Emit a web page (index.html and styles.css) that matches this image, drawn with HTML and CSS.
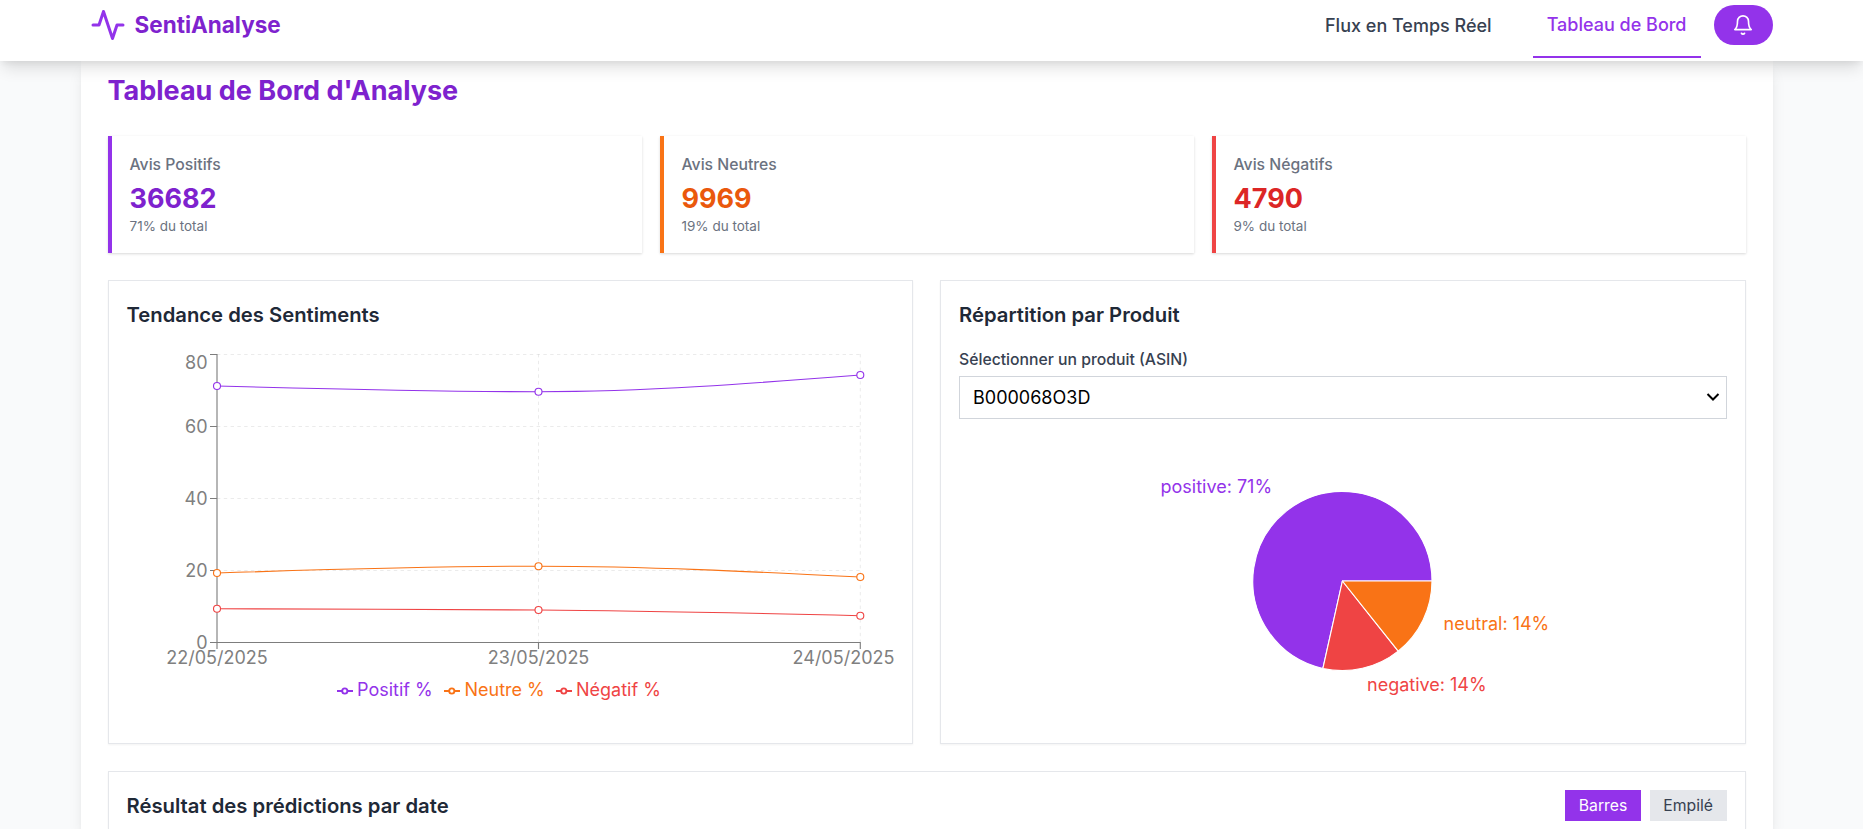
FILE: index.html
```html
<!DOCTYPE html>
<html lang="fr">
<head>
<meta charset="utf-8">
<title>SentiAnalyse</title>
<link rel="stylesheet" href="styles.css">
</head>
<body>
<header class="topbar">
  <div class="brand">
    <svg class="brand-icon" viewBox="0 0 24 24"><path d="M22 12h-4l-3 9L9 3l-3 9H2"/></svg>
    <span>SentiAnalyse</span>
  </div>
  <nav class="nav">
    <a class="nav-link">Flux en Temps Réel</a>
    <a class="nav-link nav-active">Tableau de Bord</a>
    <button class="bell" aria-label="Notifications">
      <svg viewBox="0 0 24 24"><path d="M6 8a6 6 0 0 1 12 0c0 7 3 9 3 9H3s3-2 3-9"/><path d="M10.3 21a1.94 1.94 0 0 0 3.4 0"/></svg>
    </button>
  </nav>
</header>
<main class="page">
  <h1 class="title">Tableau de Bord d'Analyse</h1>
  <section class="stats">
    <div class="stat stat-positive"><span class="stat-label">Avis Positifs</span><strong class="stat-value">36682</strong><span class="stat-note">71% du total</span></div>
    <div class="stat stat-neutral"><span class="stat-label">Avis Neutres</span><strong class="stat-value">9969</strong><span class="stat-note">19% du total</span></div>
    <div class="stat stat-negative"><span class="stat-label">Avis Négatifs</span><strong class="stat-value">4790</strong><span class="stat-note">9% du total</span></div>
  </section>
  <section class="charts">
    <div class="card">
      <h2 class="card-title">Tendance des Sentiments</h2>
      <svg class="chart" width="767" height="360" viewBox="127 353 767 360">
        <g class="grid">
          <path d="M217 354.500H860M217 426.500H860M217 498.500H860M217 570.500H860M538.500 354V642M860.300 354V642"/>
        </g>
        <g class="axis">
          <path d="M217 354V642M210 642.500H860M210 354.500H217M210 426.500H217M210 498.500H217M210 570.500H217M217 642V649M538.500 642V649M860.300 642V649"/>
        </g>
        <g class="tick tick-y">
          <text x="207.500" y="369">80</text><text x="207.500" y="433">60</text><text x="207.500" y="505">40</text><text x="207.500" y="577">20</text><text x="207.500" y="649">0</text>
        </g>
        <g class="tick tick-x">
          <text x="217" y="664">22/05/2025</text><text x="538.500" y="664">23/05/2025</text><text x="843.500" y="664">24/05/2025</text>
        </g>
        <g class="series purple">
          <path d="M217 386C324 388.900 431.500 391.700 538.500 391.700C645.700 391.700 753 383.400 860.300 375"/>
          <circle cx="217" cy="386" r="3.500"/><circle cx="538.500" cy="391.700" r="3.500"/><circle cx="860.300" cy="375" r="3.500"/>
        </g>
        <g class="series orange">
          <path d="M217 573C324 569.500 431.500 566.200 538.500 566.200C645.700 566.200 753 571.600 860.300 577"/>
          <circle cx="217" cy="573" r="3.500"/><circle cx="538.500" cy="566.200" r="3.500"/><circle cx="860.300" cy="577" r="3.500"/>
        </g>
        <g class="series red">
          <path d="M217 608.700C324 609.100 431.500 609.300 538.500 610C645.700 610.700 753 613.200 860.300 615.700"/>
          <circle cx="217" cy="608.700" r="3.500"/><circle cx="538.500" cy="610" r="3.500"/><circle cx="860.300" cy="615.700" r="3.500"/>
        </g>
        <g class="legend purple"><path d="M337 691H342.300M347.300 691H353"/><circle cx="344.800" cy="691" r="2.600"/><text x="357" y="696">Positif %</text></g>
        <g class="legend orange"><path d="M444 691H449.300M454.300 691H460"/><circle cx="451.800" cy="691" r="2.600"/><text x="464.500" y="696">Neutre %</text></g>
        <g class="legend red"><path d="M556 691H561.300M566.300 691H572"/><circle cx="563.800" cy="691" r="2.600"/><text x="576" y="696">Négatif %</text></g>
      </svg>
    </div>
    <div class="card">
      <h2 class="card-title card-title-tight">Répartition par Produit</h2>
      <label class="field-label">Sélectionner un produit (ASIN)</label>
      <div class="select"><span>B000068O3D</span><svg viewBox="0 0 14 10"><path d="M1.500 2L7 7.500L12.500 2"/></svg></div>
      <svg class="chart" width="767" height="280" viewBox="959 437 767 280">
        <g class="pie">
          <path class="slice-positive" d="M1342.400 581H1432A89.600 89.600 0 1 0 1322.900 668.450Z"/>
          <path class="slice-negative" d="M1342.400 581L1322.900 668.450A89.600 89.600 0 0 0 1398.200 651.100Z"/>
          <path class="slice-neutral" d="M1342.400 581L1398.200 651.100A89.600 89.600 0 0 0 1432 581Z"/>
        </g>
        <g class="pie-label">
          <text class="label-positive" x="1160.500" y="493">positive: 71%</text>
          <text class="label-neutral" x="1443.500" y="630">neutral: 14%</text>
          <text class="label-negative" x="1367" y="691">negative: 14%</text>
        </g>
      </svg>
    </div>
  </section>
  <section class="card results">
    <h2 class="card-title">Résultat des prédictions par date</h2>
    <div class="toggle"><button class="toggle-on">Barres</button><button>Empilé</button></div>
  </section>
</main>
</body>
</html>
```
FILE: styles.css
```css
html { font-size: 18px; }
* { box-sizing: border-box; }
body { margin: 0; height: 829px; overflow: hidden; background: #f9fafb; font-family: Inter, sans-serif; line-height: 1.5; color: #1f2937; }
.topbar { position: relative; z-index: 2; height: 61px; padding: 0 90px 0 89.5px; display: flex; justify-content: space-between; align-items: flex-start; background: #fff; box-shadow: 0 10px 15px -3px rgba(0,0,0,.12), 0 4px 6px -2px rgba(0,0,0,.06); }
.brand { display: flex; align-items: center; gap: 9px; height: 50px; font-size: 22.5px; font-weight: 700; color: #7e22ce; }
.brand-icon { width: 36px; height: 36px; fill: none; stroke: #9333ea; stroke-width: 2; stroke-linecap: round; stroke-linejoin: round; }
.nav { display: flex; align-items: flex-start; font-size: 18px; font-weight: 500; }
.nav-link { height: 58px; padding: 12px 14px 0; line-height: 27px; color: #374151; }
.nav-active { margin-left: 27px; padding-top: 11px; color: #9333ea; border-bottom: 2px solid #9333ea; }
.bell { margin: 5px 0 0 13.5px; width: 59px; height: 40px; padding: 0 1px 0 0; display: flex; align-items: center; justify-content: center; border: 0; border-radius: 20px; background: #9333ea; }
.bell svg { width: 22px; height: 22px; fill: none; stroke: #fff; stroke-width: 1.8; stroke-linecap: round; stroke-linejoin: round; }
.page { display: flex; flex-direction: column; width: 1692px; height: 768px; margin-left: 80.5px; padding: 11px 27px 0; background: #fff; box-shadow: 0 10px 15px -3px rgba(0,0,0,.1), 0 4px 6px -2px rgba(0,0,0,.05); }
.title { margin: 0 0 27px; font-size: 27px; line-height: 37px; font-weight: 700; color: #7e22ce; }
.stats { display: grid; grid-template-columns: repeat(3, 1fr); gap: 18px; margin-bottom: 27px; }
.stat { height: 117px; padding: 18px; display: flex; flex-direction: column; border-left: 4px solid; box-shadow: 0 1px 3px rgba(0,0,0,.1), 0 1px 2px rgba(0,0,0,.06); }
.stat-label { font-size: 15.75px; line-height: 22.5px; font-weight: 500; color: #6b7280; }
.stat-value { font-size: 27px; line-height: 36px; margin-top: 4px; font-weight: 700; }
.stat-note { font-size: 13.5px; line-height: 18px; color: #6b7280; }
.stat-positive { border-color: #9333ea; }
.stat-positive .stat-value { color: #7e22ce; }
.stat-neutral { border-color: #f97316; }
.stat-neutral .stat-value { color: #ea580c; }
.stat-negative { border-color: #ef4444; }
.stat-negative .stat-value { color: #dc2626; }
.charts { display: grid; grid-template-columns: 1fr 1fr; gap: 27px; margin-bottom: 27px; }
.card { height: 464px; padding: 18px; border: 1px solid #e5e7eb; background: #fff; box-shadow: 0 1px 2px rgba(0,0,0,.05); }
.card-title { margin: 0 0 22px; font-size: 20.25px; line-height: 31.5px; font-weight: 600; color: #1f2937; }
.card-title-tight { margin-bottom: 18px; }
.chart { display: block; overflow: visible; }
.grid path { fill: none; stroke: #ccc; stroke-width: 1; stroke-dasharray: 3.4 3.4; opacity: .4; }
.axis path { fill: none; stroke: #666; stroke-width: 1.125; opacity: .85; }
.tick { font-size: 18px; fill: #808080; }
.tick-y { text-anchor: end; }
.tick-x { text-anchor: middle; }
.series { fill: none; stroke: currentColor; stroke-width: 1.125; }
.series circle { fill: #fff; }
.purple { color: #9333ea; }
.orange { color: #f97316; }
.red { color: #ef4444; }
.legend { font-size: 18px; stroke: currentColor; stroke-width: 1.9; fill: none; }
.legend text { fill: currentColor; stroke: none; }
.field-label { display: block; margin-bottom: 4.5px; font-size: 15.75px; line-height: 22.5px; font-weight: 500; color: #374151; }
.select { height: 43px; margin-bottom: 18px; padding: 0 6px 0 13px; display: flex; justify-content: space-between; align-items: center; border: 1px solid #d1d5db; font-size: 18px; color: #000; }
.select svg { width: 14px; height: 10px; fill: none; stroke: #000; stroke-width: 2; }
.pie path { stroke: #fff; stroke-width: 1.125; stroke-linejoin: round; }
.slice-positive, .label-positive { fill: #9333ea; }
.slice-neutral, .label-neutral { fill: #f97316; }
.slice-negative, .label-negative { fill: #ef4444; }
.pie-label { font-size: 18px; }
.results { flex: 1; min-height: 0; height: auto; padding-bottom: 0; border-bottom: 0; display: flex; align-items: flex-start; justify-content: space-between; }
.results .card-title { margin: 0; }
.toggle { display: flex; gap: 9px; }
.toggle button { height: 31px; padding: 0 13.5px 1px; border: 0; background: #e5e7eb; color: #374151; font: 400 15.75px/29px Inter, sans-serif; }
.toggle .toggle-on { background: #9333ea; color: #fff; }
```
